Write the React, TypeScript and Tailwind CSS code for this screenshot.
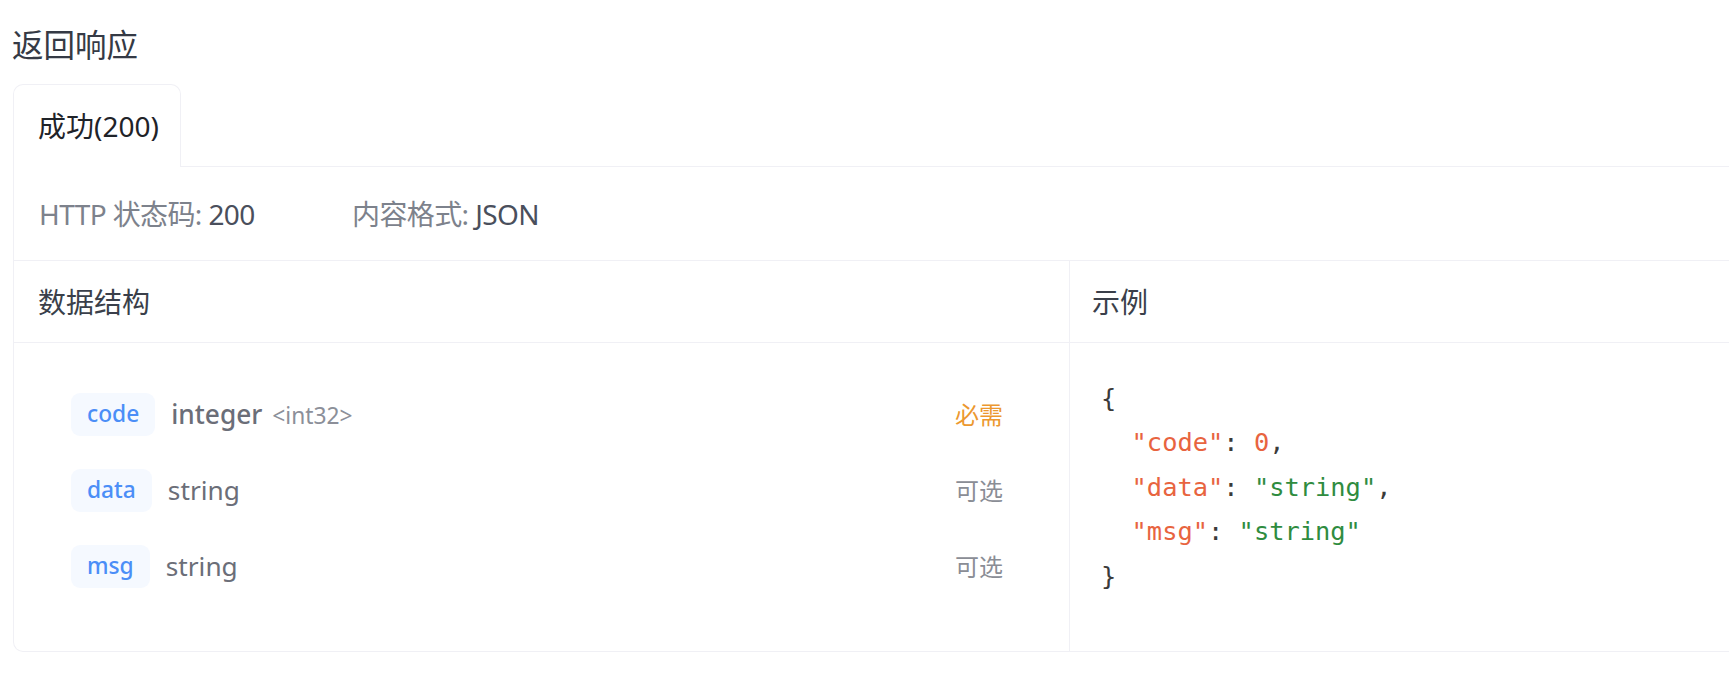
const sans = 'font-["Noto_Sans","Noto_Sans_CJK_SC",sans-serif]'

type Field = { name: string; type: string; format?: string; required: boolean }

const fields: Field[] = [
  { name: 'code', type: 'integer', format: '<int32>', required: true },
  { name: 'data', type: 'string', required: false },
  { name: 'msg', type: 'string', required: false },
]

function FieldRow({ field }: { field: Field }) {
  return (
    <div className="flex h-[43px] items-center justify-between">
      <div className="flex items-center gap-[16px]">
        <span className="flex h-[43px] items-center rounded-[9px] bg-[#f5f9ff] px-[16px] text-[22.75px] font-medium text-[#4b8ef7]">
          {field.name}
        </span>
        <span className="flex items-baseline gap-[10px]">
          <span className={field.format ? 'text-[26.25px] font-medium text-[#6b6e78]' : 'text-[26.25px] text-[#6b6e78]'}>
            {field.type}
          </span>
          {field.format && <span className="text-[22.75px] text-[#8c8f99]">{field.format}</span>}
        </span>
      </div>
      {field.required ? (
        <span className="text-[24px] text-[#ec982f]">必需</span>
      ) : (
        <span className="text-[24px] text-[#8a8d95]">可选</span>
      )}
    </div>
  )
}

function Example() {
  const k = 'text-[#e8643f]'
  const s = 'text-[#2f8c3f]'
  return (
    <pre className='pl-[31px] pt-[33px] font-["DejaVu_Sans_Mono",monospace] text-[25.4px] leading-[44.4px] text-[#3a3a3a]'>
      {'{\n'}
      {'  '}
      <span className={k}>"code"</span>: <span className={k}>0</span>,{'\n'}
      {'  '}
      <span className={k}>"data"</span>: <span className={s}>"string"</span>,{'\n'}
      {'  '}
      <span className={k}>"msg"</span>: <span className={s}>"string"</span>
      {'\n}'}
    </pre>
  )
}

export default function App() {
  return (
    <div className={`h-[694px] w-[1729px] overflow-hidden bg-white pl-[13px] ${sans}`}>
      <h2 className="mt-[21px] ml-[-1px] text-[31.5px] leading-[47px] text-[#353a45]">返回响应</h2>

      <div className="mt-[16px] flex w-[1760px] items-end">
        <div className="flex h-[83px] w-[168px] items-center rounded-t-[10px] border border-b-0 border-[#f0f0f5] pl-[24px] text-[28px] text-[#1f2329]">
          成功(200)
        </div>
        <div className="flex-1 border-b border-[#f0f0f5]" />
      </div>

      <div className="w-[1760px] rounded-b-[10px] border border-t-0 border-[#f0f0f5]">
        <div className="flex h-[94px] items-center border-b border-[#f0f0f5] pl-[25px] text-[28px] tracking-[-0.6px]">
          <span className="w-[313px]">
            <span className="text-[#7d828c]">HTTP 状态码: </span>
            <span className="text-[#4a4f5c]">200</span>
          </span>
          <span>
            <span className="text-[#7d828c]">内容格式: </span>
            <span className="text-[#4a4f5c]">JSON</span>
          </span>
        </div>

        <div className="grid grid-cols-[1056px_1fr]">
          <div className="flex h-[82px] items-center border-r border-b border-[#f0f0f5] pl-[24px] text-[28px] text-[#3a3f4a]">
            数据结构
          </div>
          <div className="flex h-[82px] items-center border-b border-[#f0f0f5] pl-[22px] text-[28px] text-[#3a3f4a]">
            示例
          </div>

          <div className="flex flex-col gap-[33px] border-r border-[#f0f0f5] pt-[50px] pr-[66px] pb-[63px] pl-[57px]">
            {fields.map((f) => (
              <FieldRow key={f.name} field={f} />
            ))}
          </div>
          <Example />
        </div>
      </div>
    </div>
  )
}
